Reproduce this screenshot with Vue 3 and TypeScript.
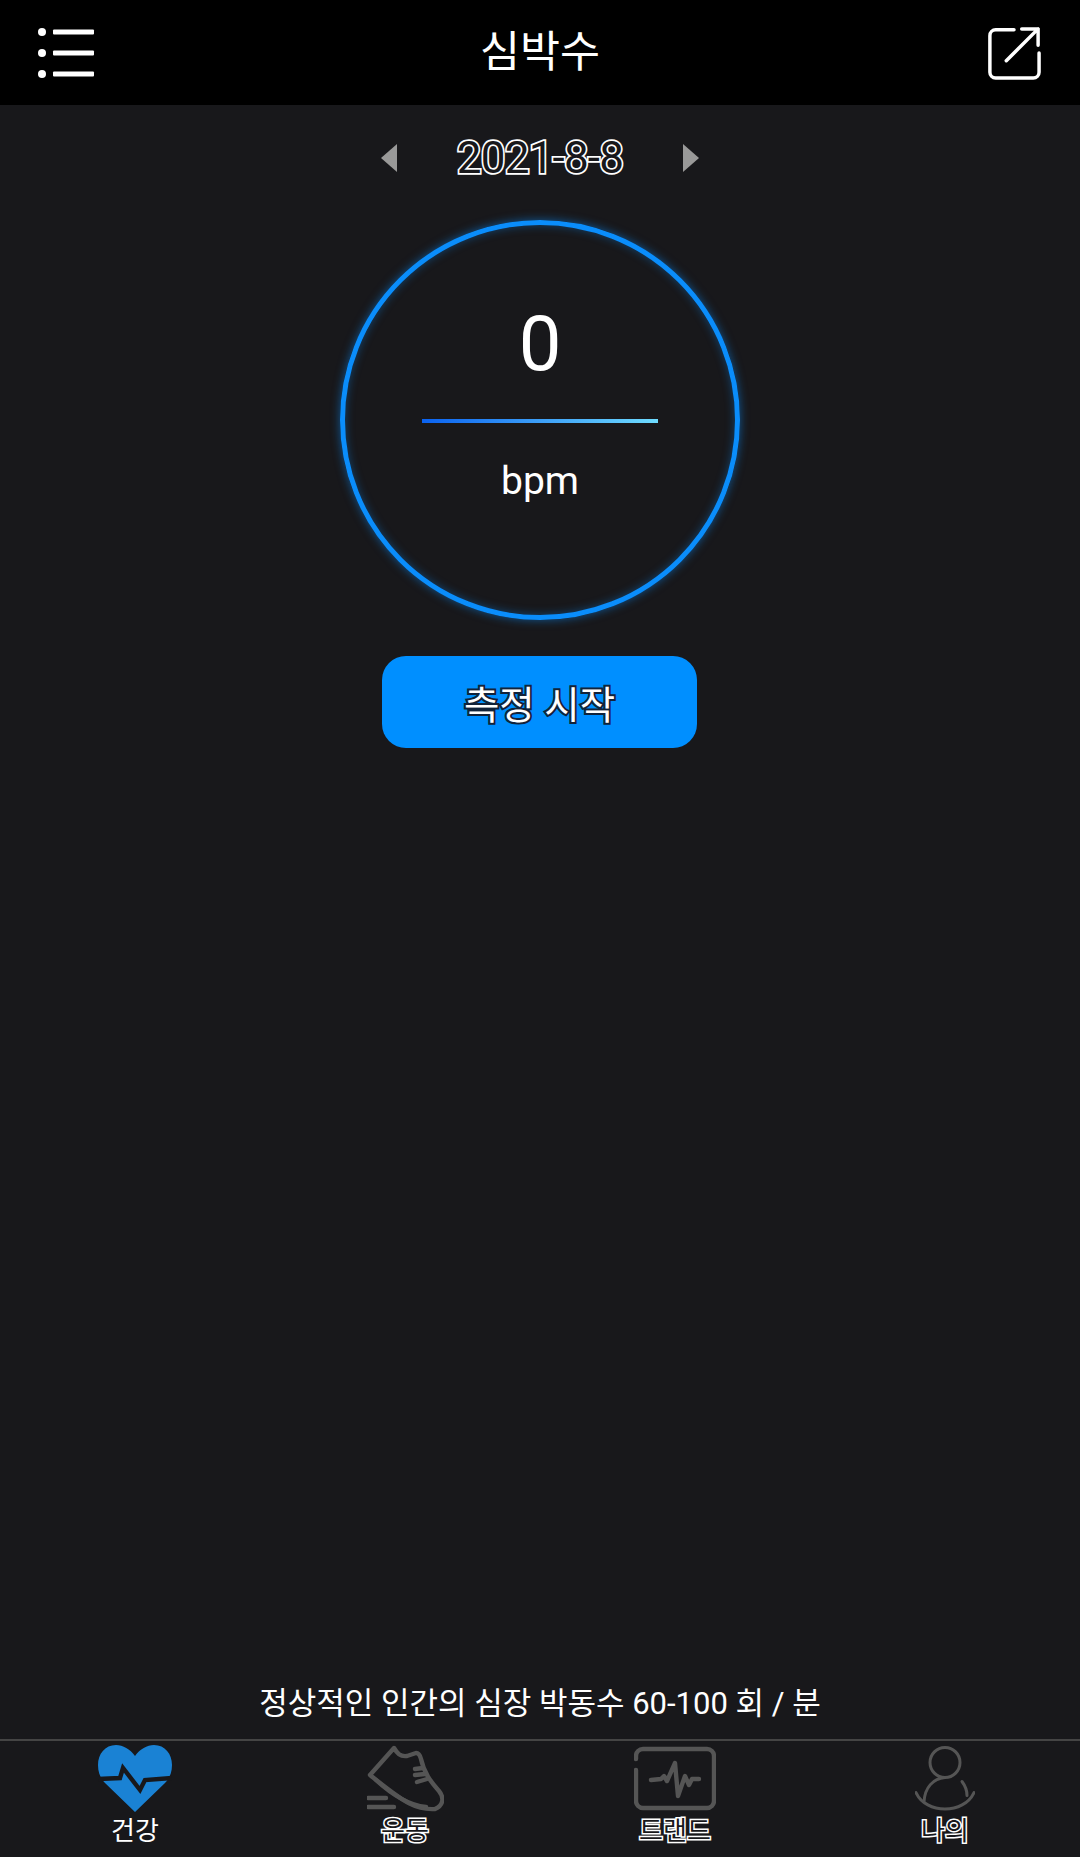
<template>
  <div class="page">
    <header class="top-bar">
      <svg class="menu-icon" width="60" height="52" viewBox="0 0 60 52" fill="#fff">
        <circle cx="5" cy="5" r="4" />
        <circle cx="5" cy="26" r="4" />
        <circle cx="5" cy="47" r="4" />
        <rect x="16" y="2.5" width="41" height="5" rx="1" />
        <rect x="16" y="23.5" width="41" height="5" rx="1" />
        <rect x="16" y="44.5" width="41" height="5" rx="1" />
      </svg>
      <h1>심박수</h1>
      <svg class="share-icon" width="54" height="54" viewBox="0 0 56 56" fill="none" stroke="#fff" stroke-width="3.6" stroke-linecap="round" stroke-linejoin="round">
        <path d="M28 4H9a6 6 0 0 0-6 6v38a6 6 0 0 0 6 6h39a6 6 0 0 0 6-6V28" />
        <path d="M20 36L53 3M36 3h17v17" />
      </svg>
    </header>

    <main class="content">
      <div class="date-row">
        <span class="arrow left"></span>
        <span class="date">{{ date }}</span>
        <span class="arrow right"></span>
      </div>

      <div class="gauge">
        <div class="gauge-value">{{ bpm }}</div>
        <div class="gauge-line"></div>
        <div class="gauge-unit">bpm</div>
      </div>

      <button class="start-btn">측정 시작</button>

      <p class="note">정상적인 인간의 심장 박동수 60-100 회 / 분</p>
    </main>

    <nav class="tabs">
      <div class="tab">
        <svg width="74" height="67" viewBox="0 0 74 67">
          <path fill="#1a82d4" d="M37 11C32 4 25 0 18 0 7 0 0 9 0 20c0 8 3 14 7 18l30 29 30-29c4-4 7-10 7-18C74 9 67 0 56 0c-7 0-14 4-19 11z" />
          <path fill="none" stroke="#18181b" stroke-width="4.4" d="M0 34l22-1 3-10 17 22 5-10 27-2" />
        </svg>
        <span class="label active">건강</span>
      </div>
      <div class="tab">
        <svg width="77" height="67" viewBox="0 0 77 67" fill="none" stroke="#555" stroke-width="4.4" stroke-linecap="round" stroke-linejoin="round">
          <path d="M3 30L27 3c3 5 6 9 13 8l9-3c3 0 4 2 5 6 3 14 10 23 18 32 5 6 5 14-4 18-18 1-28-4-65-34z" />
          <path d="M9 35c14 13 32 25 50 27" />
          <path d="M48 24l8-1M48 30l10-1M50 37l10-3" />
          <path d="M1 53h18M1 62h26" />
        </svg>
        <span class="label">운동</span>
      </div>
      <div class="tab">
        <svg width="82" height="63" viewBox="0 0 82 63" fill="none" stroke="#555" stroke-width="4.4" stroke-linecap="round" stroke-linejoin="round">
          <path d="M2 12V9a7 7 0 0 1 7-7h64a7 7 0 0 1 7 7v45a7 7 0 0 1-7 7H9a7 7 0 0 1-7-7V23" />
          <path d="M17 33l10-1 3-3 3 5 8-18 3 33 7-20 4 9 3-6 7 0" />
        </svg>
        <span class="label">트랜드</span>
      </div>
      <div class="tab">
        <svg width="60" height="66" viewBox="0 0 60 66" fill="none" stroke="#555" stroke-width="3" stroke-linecap="round">
          <circle cx="30" cy="17" r="15" />
          <path d="M30 32C18 33 10 42 9 56" />
          <path d="M47 36c3 4 5 8 5 14" />
          <path d="M1 47c10 22 48 22 58 0" />
        </svg>
        <span class="label">나의</span>
      </div>
    </nav>
  </div>
</template>

<script setup lang="ts">
import { ref } from 'vue';

const date = ref('2021-8-8');
const bpm = ref(0);
</script>

<style>
html,
body {
  margin: 0;
  background: #18181b;
}
</style>

<style scoped>
.page {
  width: 1080px;
  height: 1857px;
  display: flex;
  flex-direction: column;
  background: #18181b;
  color: #fff;
  font-family: Roboto, "Noto Sans CJK KR", sans-serif;
}

.top-bar {
  height: 105px;
  flex: none;
  display: grid;
  grid-template-columns: 1fr auto 1fr;
  align-items: center;
  padding: 0 37px;
  background: #000;
}

.top-bar h1 {
  margin: 0;
  font-size: 43.5px;
  font-weight: 400;
  line-height: 1;
}

.share-icon {
  justify-self: end;
  margin-right: 2px;
}

.content {
  flex: 1;
  display: flex;
  flex-direction: column;
  align-items: center;
}

.date-row {
  height: 35px;
  margin-top: 35px;
  display: flex;
  align-items: center;
  gap: 60px;
}

.arrow {
  width: 0;
  height: 0;
  border-top: 14px solid transparent;
  border-bottom: 14px solid transparent;
}

.arrow.left {
  border-right: 16px solid #999;
}

.arrow.right {
  border-left: 16px solid #999;
}

.date {
  font-size: 44px;
  line-height: 1;
  letter-spacing: -0.8px;
  color: #18181b;
  -webkit-text-stroke: 3.4px #fff;
  paint-order: stroke fill;
}

.gauge {
  width: 400px;
  height: 400px;
  box-sizing: border-box;
  margin-top: 45px;
  padding-top: 81px;
  display: flex;
  flex-direction: column;
  align-items: center;
  border: 5px solid #0a8dfb;
  border-radius: 50%;
  box-shadow: 0 0 10px rgba(10, 141, 251, 0.55), inset 0 0 10px rgba(10, 141, 251, 0.4);
}

.gauge-value {
  font-size: 76px;
  line-height: 76px;
}

.gauge-line {
  width: 236px;
  height: 4px;
  margin-top: 37px;
  background: linear-gradient(to right, #0a62f0, #6fdcff);
}

.gauge-unit {
  margin-top: 34px;
  font-size: 39px;
  line-height: 48px;
}

.start-btn {
  width: 315px;
  height: 92px;
  margin-top: 36px;
  margin-right: 1px;
  padding: 0;
  border: none;
  border-radius: 24px;
  background: #008fff;
  color: #fff;
  font-family: inherit;
  font-size: 38.5px;
  font-weight: 400;
  -webkit-text-stroke: 4px #12233a;
  paint-order: stroke fill;
}

.note {
  margin: auto 0 13px;
  font-size: 31px;
  line-height: 44px;
}

.tabs {
  height: 118px;
  flex: none;
  box-sizing: border-box;
  display: grid;
  grid-template-columns: repeat(4, 1fr);
  border-top: 2px solid #444;
}

.tab {
  height: 116px;
  display: flex;
  flex-direction: column;
  align-items: center;
  padding-top: 4px;
  box-sizing: border-box;
}

.tab svg {
  height: 67px;
  flex: none;
}

.label {
  margin-top: 4px;
  font-size: 26px;
  line-height: 30px;
  color: #18181b;
  -webkit-text-stroke: 3px #fff;
  paint-order: stroke fill;
}

.label.active {
  color: #fff;
  -webkit-text-stroke: 0;
}
</style>
